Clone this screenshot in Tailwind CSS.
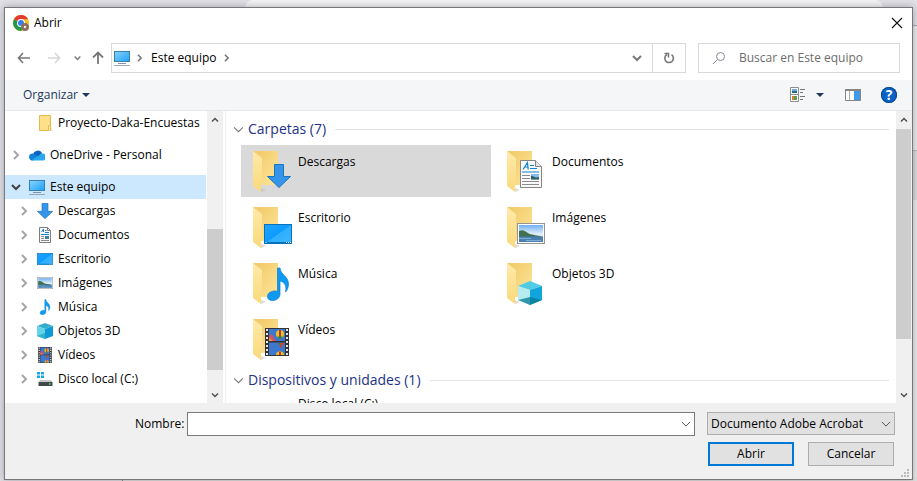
<!DOCTYPE html>
<html lang="es">
<head>
<meta charset="utf-8">
<title>Abrir</title>
<script src="https://cdn.jsdelivr.net/npm/@tailwindcss/browser@4"></script>
</head>
<body class="relative h-screen overflow-hidden bg-[#e2e1e8] font-['Open_Sans','Noto_Sans',sans-serif] text-xs leading-4 text-black">
<!-- browser window behind the dialog -->
<div class="absolute inset-0" aria-hidden="true">
  <div class="absolute left-[245px] right-[34px] top-0 h-4 rounded-t-lg bg-[#f4f4f6]"></div>
  <div class="absolute right-0 top-[25px] bottom-0 w-2 border-t border-[#a5a5ab] bg-[#ececee]"></div>
  <div class="absolute right-0 top-[150px] h-[50px] w-2 border-t border-[#b5b5b9] bg-[#dcdcdf]"></div>
  <div class="absolute bottom-0 left-[122px] right-0 h-1 border-l border-[#8a8a8a] bg-[#e2e2e2]"></div>
</div>

<svg class="absolute size-0" aria-hidden="true">
  <defs>
    <linearGradient id="back" x1="0" y1="0" x2="1" y2="1"><stop offset="0" stop-color="#efc864"/><stop offset="1" stop-color="#ffe59b"/></linearGradient>
    <linearGradient id="front" x1="0" y1="0" x2="0" y2="1"><stop offset="0" stop-color="#ffeaa9"/><stop offset="1" stop-color="#fbd97b"/></linearGradient>
    <linearGradient id="blue" x1="0" y1="0" x2="1" y2="1"><stop offset="0" stop-color="#1fa5ff"/><stop offset=".5" stop-color="#0c9bff"/><stop offset=".51" stop-color="#2fafff"/><stop offset="1" stop-color="#3cb6ff"/></linearGradient>
    <linearGradient id="screen" x1="0" y1="0" x2="1" y2="1"><stop offset="0" stop-color="#8ad3ff"/><stop offset="1" stop-color="#1ba1f7"/></linearGradient>
    <linearGradient id="sky" x1="0" y1="0" x2="0" y2="1"><stop offset="0" stop-color="#6fb0f7"/><stop offset=".5" stop-color="#dcebf7"/></linearGradient>
  </defs>
  <symbol id="chev-r" viewBox="0 0 8 10"><path d="M2 1l4 4-4 4" fill="none" stroke="currentColor" stroke-width="2"/></symbol>
  <symbol id="chev-d" viewBox="0 0 10 8"><path d="M1 2l4 4 4-4" fill="none" stroke="currentColor" stroke-width="2"/></symbol>
  <symbol id="chev-thin" viewBox="0 0 12 8"><path d="M1 1.500l5 5 5-5" fill="none" stroke="currentColor" stroke-width="1.200"/></symbol>
  <symbol id="pc" viewBox="0 0 16 16"><rect x=".5" y="1.500" width="15" height="10" fill="url(#screen)" stroke="#3c7fa9"/><path d="M4 13.500h8" stroke="#7e93a5" stroke-width="1"/><path d="M0 15.500h16" stroke="#9aa6b2" stroke-width="1"/></symbol>
  <symbol id="arrow" viewBox="0 0 24 24"><path d="M7.500 .5h9v12h7L12 23.500.5 12.500h7z" fill="#3595ea" stroke="#1b75bd"/></symbol>
  <symbol id="doc" viewBox="0 0 22 28"><path d="M.5.500h15l6 6v21H.5z" fill="#fafafa" stroke="#858585"/><path d="M15.500.500v6h6" fill="#e4e4e4" stroke="#858585"/><path d="M3 9.500L7.500 2.500l.7 7M5 7h3M10 5.500h4M10 8.500h7M2 12h17" stroke="#1583cc" stroke-width="1.200" fill="none"/><path d="M2 15.500h8M2 18.500h8M2 21.500h17M2 24.500h17" stroke="#8c8c8c"/><rect x="11" y="14" width="8" height="5.500" fill="#89bdf0"/><path d="M11 19.500v-4l5 2 3-.5v2.500z" fill="#2c6061"/></symbol>
  <symbol id="doc-s" viewBox="0 0 12 16"><path d="M.5.500h8l3 3v12H.5z" fill="#fafafa" stroke="#7d7d7d"/><path d="M8.500.500v3h3" fill="none" stroke="#7d7d7d"/><path d="M2.500 5L4.500 2v3M6 3.500h1.500M6 5.500h4M2 7.500h8" stroke="#1583cc" fill="none"/><path d="M2 9.500h3M2 11.500h3M2 13.500h8" stroke="#8c8c8c"/><rect x="6" y="9" width="4" height="3" fill="#3d8496"/></symbol>
  <symbol id="desk" viewBox="0 0 28 20" preserveAspectRatio="none"><rect x=".5" y=".5" width="27" height="19" fill="url(#blue)" stroke="#0872b8"/><path d="M1 18.500h26" stroke="#0872b8"/><path d="M22 18.500h1M24 18.500h1M26 18.500h1M1.500 18.500h1" stroke="#fff"/></symbol>
  <symbol id="pic" viewBox="0 0 28 21" preserveAspectRatio="none"><rect x=".5" y=".5" width="27" height="20" fill="#fff" stroke="#949494"/><rect x="2" y="2" width="24" height="17" fill="url(#sky)"/><path d="M2 8c4-2 6 0 9 2s9 2 15 4H2z" fill="#3f7152"/><path d="M2 13.500h24V19H2z" fill="#4a7fb1"/><path d="M2 15.500h12M9 17.500h15" stroke="#7eaed3"/></symbol>
  <symbol id="note" viewBox="0 0 22 34"><path d="M10.500 1h2.500c.5 7 8.500 8 8.500 16 0 3-1 6-3 8 1.500-6-1-10-5.500-11v13c0 4-3.500 6.500-7.500 6.500C2 33.500.5 31.500.5 29.500c0-3.500 4-5.800 8-5.500.8 0 1.500.2 2 .5z" fill="#0f9af2" stroke="#0a7fce" stroke-width=".7"/></symbol>
  <symbol id="cube" viewBox="0 0 24 24"><path d="M0 5l12-5 12 5-12 4z" fill="#4fcbe6"/><path d="M0 5l12 4v15L0 19z" fill="#b5ecf0"/><path d="M24 5L12 9v15l12-5z" fill="#10a5dc"/><path d="M12 16l-12 3 12 5 12-5z" fill="#067b94" opacity=".75"/></symbol>
  <symbol id="cube-s" viewBox="0 0 16 16"><path d="M0 3l8-3 8 3-8 3z" fill="#35adc9"/><path d="M0 3l8 3v10l-8-3z" fill="#62d6e8"/><path d="M16 3L8 6v10l8-3z" fill="#0d9ad6"/><path d="M0 13l8-3v6z" fill="#2fb3cb"/></symbol>
  <symbol id="film" viewBox="0 0 24 28"><path d="M0 0h24v28H0z" fill="#333"/><path d="M2 1v27M22 1v27" stroke="#e8e8e8" stroke-width="2" stroke-dasharray="2 2"/><path d="M4 1h16v12H4zM4 14.500h16V27H4z" fill="#3d77ce"/><path d="M4 13V8l3-2 2 4 2 3z" fill="#cf536b"/><path d="M4 13v-3l4 3z" fill="#e9a03a"/><circle cx="15" cy="6" r="4" fill="#e9c222"/><path d="M15 2v8" stroke="#b53a2c" stroke-width="2"/><path d="M12 8.500l3 3 3-3" fill="#368544"/><path d="M13 15h6l-3 5z" fill="#d5432d"/><path d="M13 15h2l1 4z" fill="#368544"/><path d="M11 27c0-5 8-5 8 0z" fill="#e9c222"/><path d="M14 23.500h2V27h-2z" fill="#c33"/></symbol>
  <symbol id="disk" viewBox="0 0 16 16"><path d="M0 1h3v2.500H0zM4 1h3v2.500H4zM0 4.500h3V7H0zM4 4.500h3V7H4z" fill="#12a8e0"/><path d="M3 9h11l1.500 2h-14z" fill="#c6c9ca"/><path d="M1.500 11h14v4h-14z" fill="#41484a"/><path d="M12 13h1.500" stroke="#5be36d" stroke-width="1.500"/></symbol>
  <symbol id="folder" viewBox="0 0 38 42"><path d="M0 0h25v34H8z" fill="url(#back)"/><path d="M8 41l5-2-5-2z" fill="#bbb" opacity=".5"/><path d="M0 0l9 7v23l-1 1v10l-8-6z" fill="url(#front)"/></symbol>
</svg>

<div class="relative h-full px-1 pb-px pt-[7px]">
<main class="flex h-full flex-col border border-[#77777b] bg-white shadow-[0_0_8px_rgba(0,0,0,0.3)]">
  <header class="flex h-[30px] shrink-0 items-center pl-2 pr-[7px]">
    <svg class="size-4" viewBox="0 0 16 16"><circle cx="8" cy="8" r="8" fill="#fbc116"/><path d="M8 8L1 4.200A8 8 0 0 1 15 4.200H8z" fill="#e33b2e"/><path d="M1 4.200A8 8 0 0 0 8 16l3.500-6.500L8 8z" fill="#229a4b"/><circle cx="8" cy="8" r="4" fill="#fff"/><circle cx="8" cy="8" r="3" fill="#3b7ded"/><circle cx="12" cy="12" r="4" fill="#8d6e63"/><circle cx="12" cy="12" r="1.200" fill="#eee"/></svg>
    <h1 class="ml-[5px] grow">Abrir</h1>
    <button class="flex size-4 items-center justify-center" aria-label="Cerrar"><svg class="size-3" viewBox="0 0 12 12"><path d="M1 1l10 10M11 1L1 11" stroke="#111" stroke-width="1.100"/></svg></button>
  </header>

  <nav class="flex h-[42px] shrink-0 items-center pb-[7px] pt-[5px] pl-3 pr-3 text-[#777]">
    <button class="w-[30px]" aria-label="Atrás"><svg class="h-3 w-[14px]" viewBox="0 0 14 12"><path d="M6 1L1.500 6 6 11M1.500 6H13" fill="none" stroke="#777" stroke-width="1.600"/></svg></button>
    <button class="w-[27px]" aria-label="Adelante"><svg class="h-3 w-[14px]" viewBox="0 0 14 12"><path d="M8 1l4.500 5L8 11M12.500 6H1" fill="none" stroke="#d6d6d6" stroke-width="1.600"/></svg></button>
    <button class="w-[18px]" aria-label="Recientes"><svg class="h-[6px] w-[7px]"><use href="#chev-d"/></svg></button>
    <button class="w-[19px]" aria-label="Arriba"><svg class="h-[14px] w-3" viewBox="0 0 12 14"><path d="M1 6.500L6 1.500l5 5M6 1.500V13" fill="none" stroke="#777" stroke-width="1.800"/></svg></button>
    <div class="flex h-[30px] grow items-center border border-[#d9d9d9] pl-0.5">
      <svg class="size-4"><use href="#pc"/></svg>
      <svg class="ml-[6px] h-2 w-[7px]"><use href="#chev-r"/></svg>
      <a href="#" class="ml-2 text-black">Este equipo</a>
      <svg class="ml-1.5 h-2 w-[7px]"><use href="#chev-r"/></svg>
      <button class="ml-auto mr-2.5" aria-label="Ubicaciones anteriores"><svg class="h-2 w-2.5"><use href="#chev-d"/></svg></button>
      <button class="flex h-full w-[33px] items-center justify-center border-l border-[#d9d9d9]" aria-label="Actualizar"><svg class="size-3" viewBox="0 0 12 12"><path d="M4 2.500a4.300 4.300 0 1 0 4.500.2" fill="none" stroke="#777" stroke-width="1.600"/><path d="M1.500 1.500h4v4" fill="none" stroke="#777" stroke-width="1.500"/></svg></button>
    </div>
    <label class="ml-3 flex h-[30px] w-[202px] items-center border border-[#d9d9d9] pl-[14px]">
      <svg class="size-3 shrink-0" viewBox="0 0 12 12"><circle cx="7.500" cy="4.500" r="4" fill="none" stroke="#85859b"/><path d="M4.500 7.500L0 12" stroke="#85859b"/></svg>
      <input type="search" aria-label="Buscar" placeholder="Buscar en Este equipo" class="ml-[14px] w-full min-w-0 outline-none placeholder:text-[#6d6d6d]">
    </label>
  </nav>

  <div class="flex h-[31px] shrink-0 items-center border-b border-[#e5e7ea] bg-[#f4f6f8] pl-[18px] pr-[15px] text-[#1e395b]">
    <button class="flex items-center gap-1">Organizar <svg class="h-1 w-2" viewBox="0 0 8 4"><path d="M0 0h8L4 4z" fill="currentColor"/></svg></button>
    <button class="ml-auto" aria-label="Cambiar vista"><svg class="size-4" viewBox="0 0 16 16"><path d="M.5.500h8v7h-8zM.5 7.500h8v7h-8z" fill="#fff" stroke="#8d8d8d"/><path d="M2 2h5v2H2z" fill="#6ba8ee"/><path d="M2 4h5v2H2z" fill="#2d6b80"/><path d="M2 9h3v4H2z" fill="#e07c39"/><path d="M4 9h3v4H4z" fill="#5c9e47"/><path d="M10 2.500h5M10 5.500h3M10 9.500h5M10 12.500h3" stroke="#777"/></svg></button>
    <button class="ml-[10px]" aria-label="Más opciones"><svg class="h-1 w-2" viewBox="0 0 8 4"><path d="M0 0h8L4 4z" fill="currentColor"/></svg></button>
    <button class="ml-[21px]" aria-label="Panel de vista previa"><svg class="h-3 w-4" viewBox="0 0 16 12"><path d="M.5.500h15v11H.5z" fill="#fff" stroke="#858585"/><path d="M0 1h16" stroke="#858585" stroke-width="2"/><path d="M4.500 2v9" stroke="#aaa"/><path d="M9 2h6v9H9z" fill="#3f9bea"/></svg></button>
    <button class="ml-5 flex size-4 items-center justify-center rounded-full bg-[#0a63c4] text-sm font-bold text-white ring-1 ring-inset ring-[#084a91]" aria-label="Ayuda">?</button>
  </div>

  <div class="flex min-h-0 grow">
    <aside class="flex w-[221px] shrink-0 border-r border-[#f0f0f0] pr-0.5">
      <ul class="grow overflow-hidden whitespace-nowrap [&>li]:flex [&>li]:h-6 [&>li]:items-center text-[#a6a6a6] [&_span]:text-black">
        <li class="mb-2 pl-[32px]"><svg class="size-4 mr-[5px]" viewBox="0 0 16 16"><path d="M2.500.500h11v11l.5 4h-11.500z" fill="#ffe08a" stroke="#e5bb4d"/><path d="M11.500 15.500v-5h2v5" fill="#ffebad" stroke="#e5bb4d"/></svg><span>Proyecto-Daka-Encuestas</span></li>
        <li class="mb-2 pl-[7px]"><svg class="h-[10px] w-2 mr-[9px]"><use href="#chev-r"/></svg><svg class="size-4 mr-[5px]" viewBox="0 0 16 16"><path d="M4 7a5 5 0 0 1 9-1l-2 4-7 3a3 3 0 0 1 0-6z" fill="#0b62bd"/><path d="M0 10a3.300 3.300 0 0 1 5-3l6 3-7 3.500A3.500 3.500 0 0 1 0 10z" fill="#1283d8"/><path d="M3 13l7-4.500a4 4 0 0 1 3-2 3.300 3.300 0 0 1 1 7H4z" fill="#2ba9ef"/></svg><span>OneDrive - Personal</span></li>
        <li class="bg-[#cce8ff] pl-[6px]"><svg class="h-2 w-[10px] mr-2 text-[#404040]"><use href="#chev-d"/></svg><svg class="size-4 mr-[5px]"><use href="#pc"/></svg><span>Este equipo</span></li>
        <li class="pl-[15px]"><svg class="h-[10px] w-2 mr-[9px]"><use href="#chev-r"/></svg><svg class="size-4 mr-[5px]"><use href="#arrow"/></svg><span>Descargas</span></li>
        <li class="pl-[15px]"><svg class="h-[10px] w-2 mr-[9px]"><use href="#chev-r"/></svg><svg class="size-4 mr-[5px]"><use href="#doc-s"/></svg><span>Documentos</span></li>
        <li class="pl-[15px]"><svg class="h-[10px] w-2 mr-[9px]"><use href="#chev-r"/></svg><svg class="h-3 w-4 mr-[5px]"><use href="#desk"/></svg><span>Escritorio</span></li>
        <li class="pl-[15px]"><svg class="h-[10px] w-2 mr-[9px]"><use href="#chev-r"/></svg><svg class="h-3 w-4 mr-[5px]"><use href="#pic"/></svg><span>Imágenes</span></li>
        <li class="pl-[15px]"><svg class="h-[10px] w-2 mr-[9px]"><use href="#chev-r"/></svg><svg class="size-4 mr-[5px]"><use href="#note"/></svg><span>Música</span></li>
        <li class="pl-[15px]"><svg class="h-[10px] w-2 mr-[9px]"><use href="#chev-r"/></svg><svg class="size-4 mr-[5px]"><use href="#cube-s"/></svg><span>Objetos 3D</span></li>
        <li class="pl-[15px]"><svg class="h-[10px] w-2 mr-[9px]"><use href="#chev-r"/></svg><svg class="size-4 mr-[5px]"><use href="#film"/></svg><span>Vídeos</span></li>
        <li class="pl-[15px]"><svg class="h-[10px] w-2 mr-[9px]"><use href="#chev-r"/></svg><svg class="size-4 mr-[5px]"><use href="#disk"/></svg><span>Disco local (C:)</span></li>
      </ul>
      <div class="ml-px flex w-4 shrink-0 flex-col items-center bg-[#f0f0f0] text-[#505050]">
        <svg class="my-[6px] h-[6px] w-2 shrink-0 rotate-180"><use href="#chev-d"/></svg>
        <div class="mt-[100px] w-full grow bg-[#cdcdcd]"></div>
        <svg class="mb-[5px] mt-[22px] h-[6px] w-2 shrink-0"><use href="#chev-d"/></svg>
      </div>
    </aside>

    <section class="min-w-0 grow overflow-hidden pl-3 pr-[7px] pt-[9px]">
      <h2 class="flex h-[18px] items-center text-sm text-[#1e3287]"><svg class="mr-1 -ml-[5px] h-[7px] w-[11px] text-[#777]"><use href="#chev-thin"/></svg>Carpetas (7)<span class="ml-[9px] h-px grow bg-[#e2e2e2]"></span></h2>
      <ul class="ml-[3px] mt-[7px] grid grid-cols-[250px_250px] gap-1 [&>li]:flex [&>li]:h-[52px] [&>li]:pl-3 [&>li]:pt-[6px] [&_div]:relative [&_div]:mr-[7px] [&_div]:h-[42px] [&_div]:w-[38px] [&_span]:mt-[3px]">
        <li class="bg-[#d9d9d9]"><div><svg class="h-[42px] w-[38px]"><use href="#folder"/></svg><svg class="absolute left-[14px] top-[13px] size-6"><use href="#arrow"/></svg></div><span>Descargas</span></li>
        <li><div><svg class="h-[42px] w-[38px]"><use href="#folder"/></svg><svg class="absolute left-[13px] top-[9px] h-7 w-[22px]"><use href="#doc"/></svg></div><span>Documentos</span></li>
        <li><div><svg class="h-[42px] w-[38px]"><use href="#folder"/></svg><svg class="absolute left-[11px] top-[17px] h-5 w-7"><use href="#desk"/></svg></div><span>Escritorio</span></li>
        <li><div><svg class="h-[42px] w-[38px]"><use href="#folder"/></svg><svg class="absolute left-[10px] top-4 h-[21px] w-7"><use href="#pic"/></svg></div><span>Imágenes</span></li>
        <li><div><svg class="h-[42px] w-[38px]"><use href="#folder"/></svg><svg class="absolute left-[14px] top-1 h-[34px] w-[22px]"><use href="#note"/></svg></div><span>Música</span></li>
        <li><div><svg class="h-[42px] w-[38px]"><use href="#folder"/></svg><svg class="absolute left-[11px] top-[18px] size-6"><use href="#cube"/></svg></div><span>Objetos 3D</span></li>
        <li><div><svg class="h-[42px] w-[38px]"><use href="#folder"/></svg><svg class="absolute left-3 top-[9px] h-7 w-6"><use href="#film"/></svg></div><span>Vídeos</span></li>
      </ul>
      <h2 class="mt-[6px] flex h-[18px] items-center text-sm text-[#1e3287]"><svg class="mr-1 -ml-[5px] h-[7px] w-[11px] text-[#777]"><use href="#chev-thin"/></svg>Dispositivos y unidades (1)<span class="ml-[9px] h-px grow bg-[#e2e2e2]"></span></h2>
      <p class="ml-[60px] mt-[7px]">Disco local (C:)</p>
    </section>
    <div class="flex w-4 shrink-0 flex-col items-center bg-[#f0f0f0] text-[#505050]">
      <svg class="my-[6px] h-[6px] w-2 shrink-0 rotate-180"><use href="#chev-d"/></svg>
      <div class="mr-px w-[15px] grow bg-[#cdcdcd]"></div>
      <svg class="mb-[5px] mt-[53px] h-[6px] w-2 shrink-0"><use href="#chev-d"/></svg>
    </div>
  </div>

  <footer class="relative h-[76px] shrink-0 bg-[#f0f0f0] pl-[130px] pr-[17px] pt-[9px]">
    <div class="flex">
      <label for="name" class="w-[52px] shrink-0 pt-1">Nombre:</label>
      <div class="relative grow"><input id="name" class="h-6 w-full border border-[#7a7a7a] bg-white px-1 outline-none"><svg class="absolute right-1 top-2 h-2 w-[10px] text-[#555]"><use href="#chev-thin"/></svg></div>
      <div class="relative ml-3 w-[188px]"><select aria-label="Tipo de archivo" class="h-[23px] w-full appearance-none border border-[#adadad] bg-[#e1e1e1] pl-[3px]"><option>Documento Adobe Acrobat</option></select><svg class="absolute right-1 top-2 h-2 w-[10px] text-[#555]"><use href="#chev-thin"/></svg></div>
    </div>
    <div class="mt-[6px] mr-px flex justify-end gap-[14px]">
      <button class="h-6 w-[86px] border-2 border-[#0078d7] bg-[#e1e1e1]">Abrir</button>
      <button class="h-6 w-[86px] border border-[#adadad] bg-[#e1e1e1]">Cancelar</button>
    </div>
    <svg class="absolute bottom-0.5 right-[3px] size-2" viewBox="0 0 8 8" fill="#bcbcbc"><path d="M6 0h2v2H6zM3 3h2v2H3zM6 3h2v2H6zM0 6h2v2H0zM3 6h2v2H3zM6 6h2v2H6z"/></svg>
  </footer>
</main>
</div>
</body>
</html>
